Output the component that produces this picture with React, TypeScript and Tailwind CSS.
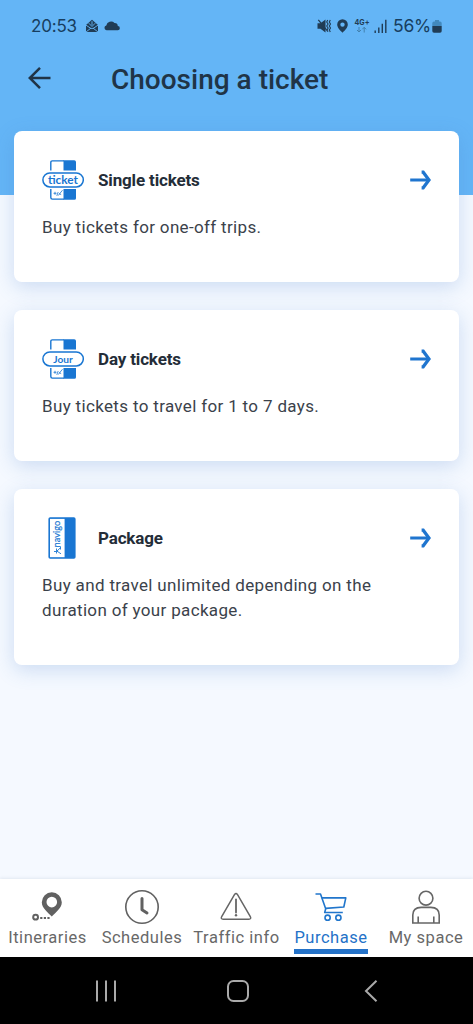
import type { ReactNode } from 'react';

type Ticket = {
  title: string;
  description: string;
  icon: ReactNode;
  cardClass: string;
};

type Tab = {
  label: string;
  icon: ReactNode;
  className: string;
  active?: boolean;
};

function TicketIcon({ label, textLength, fontSize }: { label: string; textLength: number; fontSize: number }) {
  return (
    <svg width="42" height="40" viewBox="0 0 42 40" fill="none">
      <path d="M8.8 10.6V2.4Q8.8.9 10.3.9H22" stroke="#1976d2" strokeWidth="1.4" />
      <path d="M21.5.2H32.2Q34 .2 34 2v8.6H21.5zM21.5 29H34v9.2q0 1.6-1.6 1.6H21.5z" fill="#1976d2" />
      <path d="M8.8 29v8.6q0 1.5 1.5 1.5H22" stroke="#1976d2" strokeWidth="1.4" />
      <rect x="0.9" y="12.9" width="40.4" height="14" rx="7" fill="#fff" stroke="#1976d2" strokeWidth="1.5" />
      <path d="M11.5 33.3h3M13 31.8v3M14.8 35.8l1.4-3.8M16.2 35.6l4.3-5.4M17 33.6l2.2 1" stroke="#1976d2" strokeWidth="0.8" />
      <text
        x="21"
        y="23.6"
        textAnchor="middle"
        textLength={textLength}
        lengthAdjust="spacingAndGlyphs"
        fontFamily="Lato, sans-serif"
        fontWeight="700"
        fontSize={fontSize}
        fill="#1976d2"
      >
        {label}
      </text>
    </svg>
  );
}

function PassIcon() {
  return (
    <svg width="42" height="42" viewBox="0 0 42 42" fill="none">
      <rect x="6.4" y="0.2" width="27.2" height="41.6" rx="1.8" fill="#1976d2" />
      <path d="M8 1.9H22.6V40.2H8z" fill="#fff" />
      <text
        transform="translate(17.8 30.4) rotate(-90)"
        textLength="26.5"
        lengthAdjust="spacingAndGlyphs"
        fontFamily="Lato, sans-serif"
        fontSize="9.5"
        fill="#1976d2"
        stroke="#1976d2"
        strokeWidth="0.2"
      >
        navigo
      </text>
      <path d="M12 34.5h2M14.5 31.5v5M15 34l3-2.8M15 34.2l4 2.6M18.5 29.5v3" stroke="#1976d2" strokeWidth="0.9" />
    </svg>
  );
}

function CardArrow() {
  return (
    <svg width="22" height="20" viewBox="0 0 22 20" fill="none" stroke="#1f75cf">
      <path d="M1.2 10H19" strokeWidth="3" />
      <path d="M12.6 2.2h1.6L20 10l-5.8 7.8h-1.6" strokeWidth="3.2" />
    </svg>
  );
}

const TICKETS: Ticket[] = [
  {
    title: 'Single tickets',
    description: 'Buy tickets for one-off trips.',
    icon: <TicketIcon label="ticket" textLength={30} fontSize={10.5} />,
    cardClass: 'h-[151px]',
  },
  {
    title: 'Day tickets',
    description: 'Buy tickets to travel for 1 to 7 days.',
    icon: <TicketIcon label="Jour" textLength={19.5} fontSize={8.6} />,
    cardClass: 'h-[151px]',
  },
  {
    title: 'Package',
    description: 'Buy and travel unlimited depending on the duration of your package.',
    icon: <PassIcon />,
    cardClass: 'h-[176px]',
  },
];

const TABS: Tab[] = [
  {
    label: 'Itineraries',
    className: 'w-[94px]',
    icon: (
      <svg width="36" height="36" viewBox="0 0 36 36" fill="none">
        <path
          fillRule="evenodd"
          d="M22.8 3.2a10 10 0 0 0-10 10c0 6 6.2 10.2 10 14.4 3.7-4.2 10-8.4 10-14.4a10 10 0 0 0-10-10zm0 4.6a5.3 5.3 0 1 1 0 10.6 5.3 5.3 0 0 1 0-10.6z"
          fill="#616161"
        />
        <circle cx="6.6" cy="28.2" r="2.4" stroke="#616161" strokeWidth="2" />
        <path d="M11.2 29h2.2M14.8 29H17M18.4 29h2.2" stroke="#616161" strokeWidth="2" />
      </svg>
    ),
  },
  {
    label: 'Schedules',
    className: 'w-[95px]',
    icon: (
      <svg width="36" height="36" viewBox="0 0 36 36" fill="none" stroke="#616161">
        <circle cx="18" cy="18" r="16.2" strokeWidth="1.6" />
        <path d="M18 9.5v11.2l5 3.3" strokeWidth="3" strokeLinecap="round" strokeLinejoin="round" />
      </svg>
    ),
  },
  {
    label: 'Traffic info',
    className: 'w-[94px]',
    icon: (
      <svg width="36" height="36" viewBox="0 0 36 36" fill="none" stroke="#666">
        <path
          d="M16.6 5.4 3.7 27.5q-1.3 2.6 1.5 2.8h25.6q2.8-.2 1.5-2.8L19.4 5.4q-1.4-1.7-2.8 0z"
          strokeWidth="1.5"
        />
        <path d="M18 10.3v13.2" strokeWidth="1.8" strokeLinecap="round" />
        <circle cx="18" cy="26.3" r="1.2" fill="#666" stroke="none" />
      </svg>
    ),
  },
  {
    label: 'Purchase',
    className: 'w-[95px]',
    active: true,
    icon: (
      <svg width="36" height="36" viewBox="0 0 36 36" fill="none" stroke="#2176cc" strokeWidth="1.6">
        <path d="M2.5 5h5l5.2 14.8-1 3.7h18.1" strokeLinejoin="round" />
        <path d="M8.7 8.9h24.1L30.8 18l-18.1 1.4" strokeLinejoin="round" />
        <circle cx="14.6" cy="28.7" r="2.6" />
        <circle cx="25.4" cy="28.7" r="2.6" />
      </svg>
    ),
  },
  {
    label: 'My space',
    className: 'w-[95px]',
    icon: (
      <svg width="36" height="36" viewBox="0 0 36 36" fill="none" stroke="#666" strokeWidth="1.6">
        <circle cx="18" cy="9.2" r="6.9" />
        <path d="M4.8 34V26q0-7.4 8.4-7.6h9.6q8.4.2 8.4 7.6v8zM10.2 27.4V34M25.8 27.4V34" />
      </svg>
    ),
  },
];

function StatusBar() {
  return (
    <div className="flex h-[52px] items-center pl-[31px] text-[#173e60]">
      <span className="w-[47px] pt-px font-['Inter',sans-serif] text-[17px] tracking-[-0.2px] whitespace-nowrap">20:53</span>
      <svg className="ml-[7px]" width="14" height="14" viewBox="0 0 14 14">
        <path d="M1 6 7 .8 13 6v7H1z" fill="#203c55" />
        <path d="M1 6.2 6 9.5M13 6.2 8 9.5M1 13l5-4 1 .8 1-.8 5 4M3.8 4.2 7 7.5l3.2-3.3M7 2.2v4" stroke="#64b5f6" strokeWidth="0.9" fill="none" />
      </svg>
      <svg className="ml-[5px]" width="16" height="10" viewBox="0 0 16 10">
        <path d="M2.5 9.3a2.4 2.4 0 0 1-.2-4.7A4.9 4.9 0 0 1 10.5 2a3.2 3.2 0 0 1 3.3 3.1 2.1 2.1 0 0 1-.1 4.2z" fill="#203c55" />
      </svg>
      <svg className="ml-[197px]" width="14" height="14" viewBox="0 0 14 14" fill="none" stroke="#203c55">
        <path d="M.5 4.3h3L8.5.5v13L3.5 9.7h-3z" fill="#203c55" stroke="none" />
        <path d="M1.3.8 11 12.7" strokeWidth="1.3" />
        <path d="m10.7 1-1 2 1.4 2-1.4 2 1.4 2-1 2M13.3 1l-1 2 1.2 2-1.2 2 1.2 2-1.2 2 1 2" strokeWidth="1.1" />
      </svg>
      <svg className="ml-1.5" width="11" height="14" viewBox="0 0 11 14">
        <path fillRule="evenodd" d="M5.5.2A5.3 5.3 0 0 0 .2 5.5c0 3.4 3.1 5.7 5.3 8.3 2.2-2.6 5.3-4.9 5.3-8.3A5.3 5.3 0 0 0 5.5.2zm0 3.2a2.2 2.2 0 1 1 0 4.4 2.2 2.2 0 0 1 0-4.4z" fill="#203c55" />
      </svg>
      <svg className="ml-1.5" width="16" height="16" viewBox="0 0 16 16">
        <text x="0.5" y="7.3" textLength="15" lengthAdjust="spacingAndGlyphs" fontFamily="Inter, sans-serif" fontWeight="700" fontSize="7.8" fill="#203c55">
          4G+
        </text>
        <path d="M5 9v5M3 12l2 2 2-2M10.2 14.5V9.3M8.3 11.3l1.9-2 1.9 2" fill="none" stroke="#4281ae" strokeWidth="1" />
      </svg>
      <svg className="ml-1" width="13" height="14" viewBox="0 0 13 14" stroke="#203c55" strokeWidth="1.4">
        <path d="M1.2 11.5V14M4.8 8.5V14M8.3 4.7V14M11.8.7V14" />
      </svg>
      <span className="ml-1.5 w-[37px] pt-px font-['Inter',sans-serif] text-[17.5px] tracking-[-0.2px] whitespace-nowrap">56%</span>
      <svg className="ml-[2px]" width="10" height="13" viewBox="0 0 10 13">
        <path d="M3 0h4v1.5h1q1.7 0 1.7 1.7V6H.3V3.2q0-1.7 1.7-1.7h1z" fill="#428abf" />
        <path d="M.3 6h9.4v5q0 1.7-1.7 1.7H2Q.3 12.7.3 11z" fill="#203c55" />
      </svg>
    </div>
  );
}

function TicketCard({ ticket }: { ticket: Ticket }) {
  return (
    <article className={`rounded-lg bg-white px-7 pt-7 shadow-[0_5px_20px_rgba(70,125,200,0.24)] ${ticket.cardClass}`}>
      <div className="flex h-[42px] items-center">
        {ticket.icon}
        <h2 className="ml-3.5 flex-1 pt-px text-[17px] font-bold tracking-[-0.15px] text-[#242d38]">{ticket.title}</h2>
        <CardArrow />
      </div>
      <p className="mt-3.5 w-[350px] text-[17px] leading-[25px] tracking-[0.34px] text-[#3b424b]">
        {ticket.description}
      </p>
    </article>
  );
}

export default function App() {
  return (
    <div className="flex h-[1024px] w-[473px] flex-col overflow-hidden bg-[#f5f9ff] font-['Roboto',sans-serif]">
      <header className="h-[195px] shrink-0 bg-[#64b5f6]">
        <StatusBar />
        <div className="flex h-[52px] items-center pl-7">
          <svg width="24" height="22" viewBox="0 0 24 22" fill="none" stroke="#203447" strokeWidth="2.5">
            <path d="M22.5 11H2M12 .9 1.8 11 12 21.1" />
          </svg>
          <h1 className="ml-[59px] pt-[3px] text-[28px] font-medium whitespace-nowrap text-[#203447]">Choosing a ticket</h1>
        </div>
      </header>

      <main className="relative -mt-16 flex flex-1 flex-col gap-7 px-3.5">
        {TICKETS.map((ticket) => (
          <TicketCard key={ticket.title} ticket={ticket} />
        ))}
      </main>

      <nav className="flex h-[78px] shrink-0 bg-white shadow-[0_-1px_3px_rgba(60,80,120,0.1)]">
        {TABS.map((tab) => (
          <div key={tab.label} className={`flex flex-col items-center pt-2.5 ${tab.className}`}>
            {tab.icon}
            <span
              className={`mt-px ml-px h-[28px] border-b-[5px] text-[16.5px] leading-[23px] tracking-[0.53px] whitespace-nowrap ${
                tab.active ? 'border-[#2472c8] text-[#2472c8]' : 'border-transparent text-[#686868]'
              }`}
            >
              {tab.label}
            </span>
          </div>
        ))}
      </nav>

      <footer className="flex h-[67px] shrink-0 items-center justify-between bg-black px-[95px]">
        <svg width="22" height="22" viewBox="0 0 22 22" stroke="#aaa" strokeWidth="2">
          <path d="M2 .5v21M11 .5v21M20 .5v21" />
        </svg>
        <svg className="ml-[3px]" width="22" height="22" viewBox="0 0 22 22" fill="none" stroke="#aaa" strokeWidth="2">
          <rect x="1" y="1" width="20" height="20" rx="5.5" />
        </svg>
        <svg width="22" height="22" viewBox="0 0 22 22" fill="none" stroke="#aaa" strokeWidth="2">
          <path d="M20.5.8 10 11l10.5 10.2" />
        </svg>
      </footer>
    </div>
  );
}
